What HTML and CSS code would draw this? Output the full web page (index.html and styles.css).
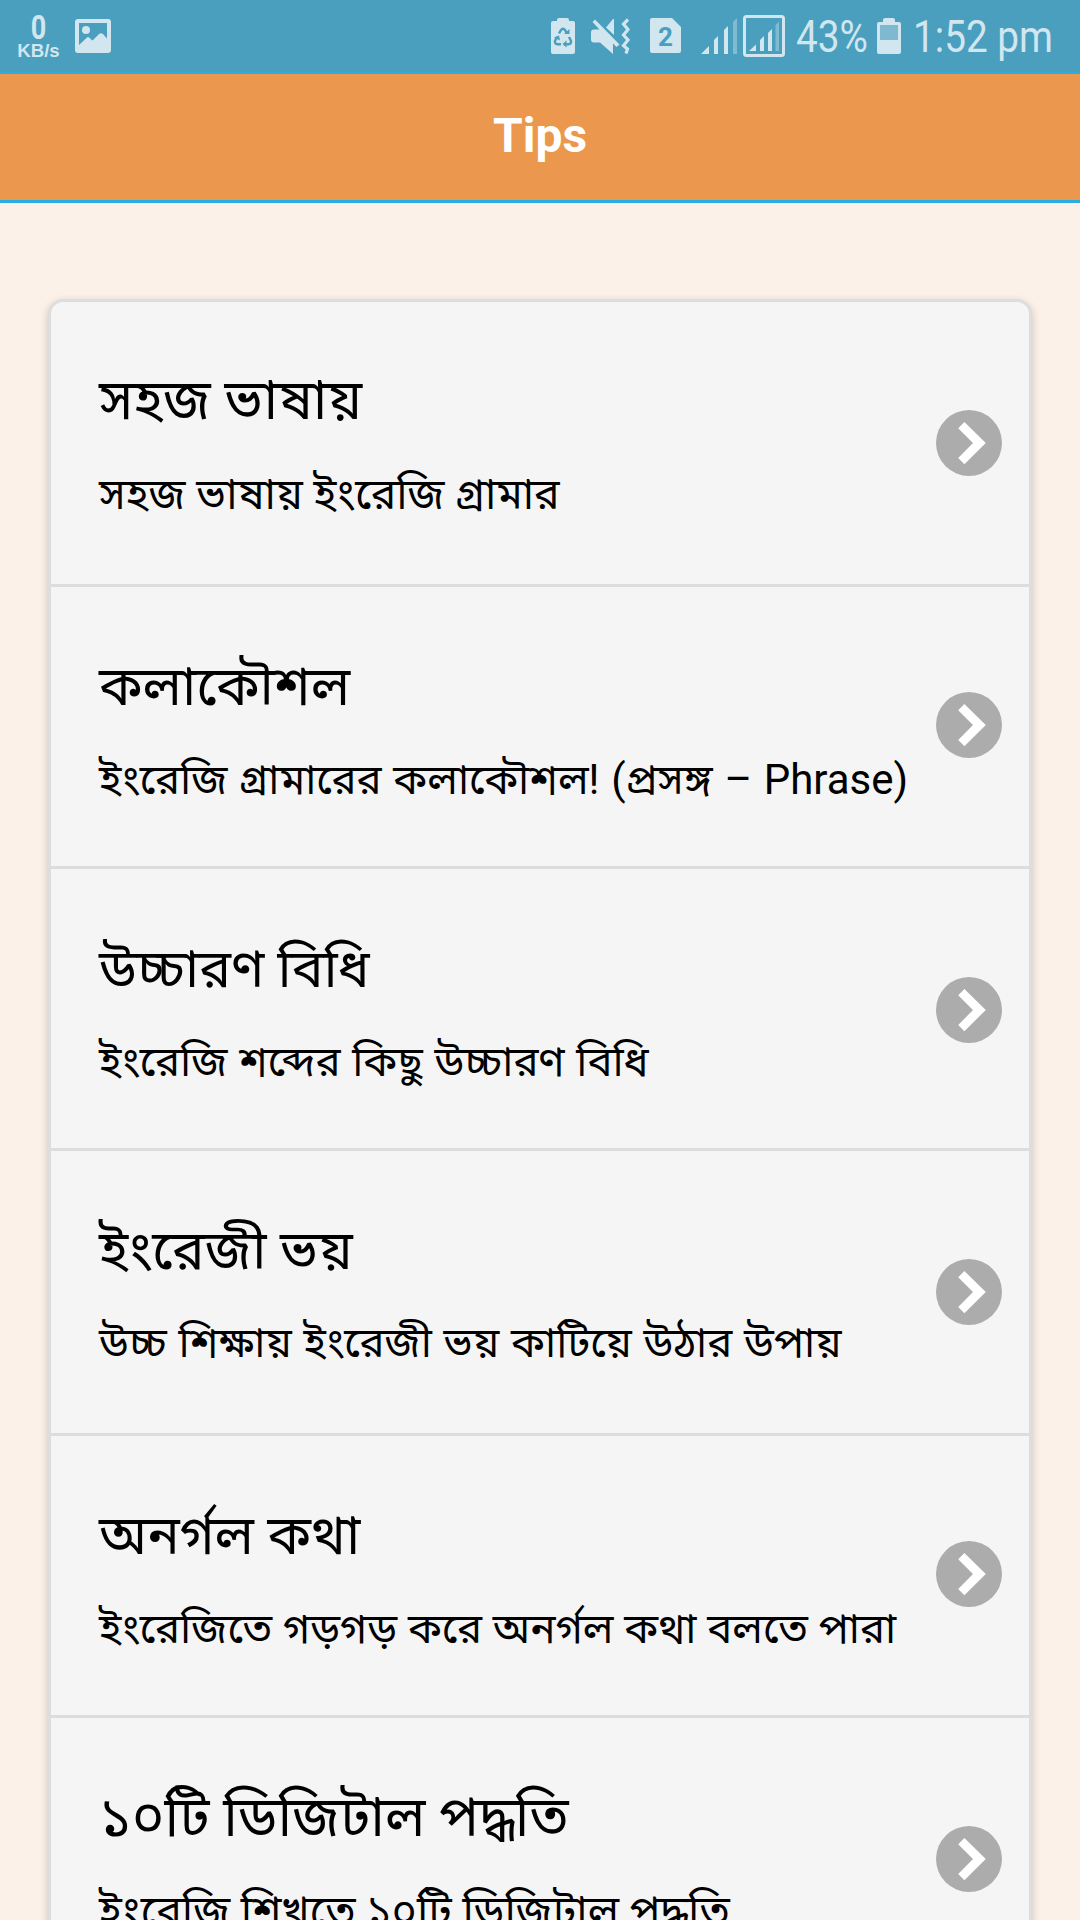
FILE: index.html
```
<!DOCTYPE html>
<html lang="bn">
<head>
  <meta charset="UTF-8" />
  <meta name="viewport" content="width=device-width, initial-scale=1.0" />
  <title>Tips</title>
  <link rel="stylesheet" href="styles.css">
</head>
<body>
  <svg width="0" height="0" class="defs">
    <symbol id="arrow" viewBox="0 0 66 66">
      <circle cx="33" cy="33" r="33" fill="#acacac" />
      <path d="M22.2 18.2 28.4 12 49.8 33 28.4 54.2 22.2 48 37 33z" fill="#fff" />
    </symbol>
  </svg>

  <div class="status-bar">
    <div class="status-left">
      <div class="speed">
        <span class="speed-value">0</span>
        <span class="speed-unit">KB/s</span>
      </div>
      <svg class="icon-picture" width="36" height="34" viewBox="0 0 36 34">
        <path fill="currentColor" fill-rule="evenodd" d="M3 0h30a3 3 0 0 1 3 3v28a3 3 0 0 1-3 3H3a3 3 0 0 1-3-3V3a3 3 0 0 1 3-3zM4 4v22l8-7.500q1-1 2 0l3.500 3 6.500-6.500q2-1.500 4 0l4 4.500V4z" />
        <circle cx="11" cy="11" r="4" fill="currentColor" />
      </svg>
    </div>

    <div class="status-right">
      <svg class="icon-saver" width="24" height="36" viewBox="0 0 24 36">
        <path fill="currentColor" d="M6 3V2q0-2 2-2h8q2 0 2 2v1h4q2 0 2 2v29q0 2-2 2H2q-2 0-2-2V5q0-2 2-2z" />
        <g fill="none" stroke="#4a9ebe" stroke-width="2.400">
          <path d="M8 15.500 10 12q2-2.500 4 0l2 3.500" />
          <path d="M6 19l-2 4q-.500 3 2.500 3.200H10" />
          <path d="M18 19l2 4q.500 3-2.500 3.200H13" />
        </g>
        <path fill="#4a9ebe" d="M13 16h5.500v-5zM3 19.500l5-2 1 5zM15.500 22.500v7l-4-3.400z" />
      </svg>
      <svg class="icon-mute" width="39" height="37" viewBox="0 0 39 37">
        <path fill="currentColor" d="M4 1.500 1.500 4 8.500 11.500H3q-3 0-3 3v7q0 3 3 3h6L22 36V25.500l3.500 3.500 3-2.500zM15 9.500 22 1h1v16z" />
        <path fill="none" stroke="currentColor" stroke-width="3.200" d="M37 1.500 32.500 6 37 11.500 32.500 17 37 22 32.500 27.500 36.500 31 35 35.500" />
      </svg>
      <svg class="icon-sim" width="31" height="35" viewBox="0 0 31 35">
        <path fill="currentColor" d="M2 0h20l9 9v24q0 2-2 2H2q-2 0-2-2V2q0-2 2-2z" />
        <text x="15.500" y="28" text-anchor="middle" class="sim-number">2</text>
      </svg>
      <svg class="icon-signal" width="36" height="36" viewBox="0 0 36 36">
        <path fill="currentColor" d="M0 36 8 28v8zM13 36V22l4-4v18zM23 36V12l4-4v28z" />
        <path fill="currentColor" opacity=".4" d="M32 36V4l4-4v36z" />
      </svg>
      <svg class="icon-signal-box" width="42" height="42" viewBox="0 0 42 42">
        <rect x="1.500" y="1.500" width="39" height="39" rx="2" fill="none" stroke="currentColor" stroke-width="3" />
        <path fill="currentColor" d="M6 36l7-6.500V36zM17 36V25l4-4v15zM25 36V18l4-4v22z" />
        <path fill="currentColor" opacity=".4" d="M32.500 36V10l3.500-3.500V36z" />
      </svg>
      <span class="percent">43%</span>
      <svg class="icon-battery" width="24" height="36" viewBox="0 0 24 36">
        <path fill="currentColor" d="M6 4V2q0-2 2-2h8q2 0 2 2v2h4q2 0 2 2v28q0 2-2 2H2q-2 0-2-2V6q0-2 2-2z" />
        <path fill="#7fb9d0" d="M3 7h18v15H3z" />
      </svg>
      <span class="time">1:52 pm</span>
    </div>
  </div>

  <header class="toolbar">Tips</header>

  <ul class="list">
    <li class="item">
      <div class="text wide">
        <h2>সহজ ভাষায়</h2>
        <p>সহজ ভাষায় ইংরেজি গ্রামার</p>
      </div>
      <svg class="arrow"><use href="#arrow" /></svg>
    </li>
    <li class="item">
      <div class="text">
        <h2>কলাকৌশল</h2>
        <p>ইংরেজি গ্রামারের কলাকৌশল! (প্রসঙ্গ – Phrase)</p>
      </div>
      <svg class="arrow"><use href="#arrow" /></svg>
    </li>
    <li class="item">
      <div class="text narrow">
        <h2>উচ্চারণ বিধি</h2>
        <p>ইংরেজি শব্দের কিছু উচ্চারণ বিধি</p>
      </div>
      <svg class="arrow"><use href="#arrow" /></svg>
    </li>
    <li class="item">
      <div class="text medium">
        <h2>ইংরেজী ভয়</h2>
        <p>উচ্চ শিক্ষায় ইংরেজী ভয় কাটিয়ে উঠার উপায়</p>
      </div>
      <svg class="arrow"><use href="#arrow" /></svg>
    </li>
    <li class="item">
      <div class="text tight">
        <h2>অনর্গল কথা</h2>
        <p>ইংরেজিতে গড়গড় করে অনর্গল কথা বলতে পারা</p>
      </div>
      <svg class="arrow"><use href="#arrow" /></svg>
    </li>
    <li class="item">
      <div class="text wide">
        <h2>১০টি ডিজিটাল পদ্ধতি</h2>
        <p>ইংরেজি শিখতে ১০টি ডিজিটাল পদ্ধতি</p>
      </div>
      <svg class="arrow"><use href="#arrow" /></svg>
    </li>
  </ul>
</body>
</html>
```

FILE: styles.css
```
* {
  box-sizing: border-box;
}
body {
  margin: 0;
  height: 1920px;
  overflow: hidden;
  background: #fcf1e8;
  color: #000;
  font-family: Roboto, "Noto Sans Bengali", "Noto Sans", sans-serif;
}
.defs {
  display: block;
}
.status-bar {
  display: flex;
  justify-content: space-between;
  height: 74px;
  padding-left: 17px;
  background: #4a9ebe;
  border-bottom: 2px solid #2bace2;
  color: #d1e6ee;
}
.status-left,
.status-right {
  display: flex;
  align-items: flex-start;
}
.speed {
  width: 43px;
  padding-top: 14px;
  text-align: center;
}
.speed-value {
  display: block;
  font-size: 33px;
  font-weight: bold;
  line-height: 28px;
  transform: scaleX(0.82);
}
.speed-unit {
  display: block;
  font-family: "Liberation Sans", Arial, sans-serif;
  font-size: 18.6px;
  font-weight: bold;
  line-height: 18px;
}
.icon-picture {
  margin: 19px 0 0 15px;
}
.icon-saver {
  margin: 18px 16px 0 0;
}
.icon-mute {
  margin: 18px 20px 0 0;
}
.icon-sim {
  margin: 18px 20px 0 0;
}
.sim-number {
  font: bold 26px Roboto, sans-serif;
  fill: #4a9ebe;
}
.icon-signal {
  margin: 18px 6px 0 0;
}
.icon-signal-box {
  margin-top: 15px;
}
.percent,
.time {
  font-size: 44px;
  line-height: 75px;
  white-space: nowrap;
  transform: scaleX(0.88);
  transform-origin: left;
}
.percent {
  width: 81px;
  margin-left: 11px;
}
.icon-battery {
  margin: 18px 12px 0 0;
}
.time {
  width: 167px;
}
.toolbar {
  height: 129px;
  border-bottom: 3px solid #2bace2;
  background: #eb984e;
  color: #fff;
  font-size: 48px;
  font-weight: bold;
  line-height: 123px;
  text-align: center;
}
.list {
  margin: 96px 48px 0;
  padding: 0;
  list-style: none;
  background: #f5f5f5;
  border: 3px solid #ddd;
  border-radius: 15px 15px 0 0;
  box-shadow: 0 3px 9px rgba(0, 0, 0, 0.2);
}
.item {
  display: flex;
  align-items: center;
  justify-content: space-between;
  height: 282px;
  padding: 0 27px 0 48px;
  border-bottom: 3px solid #ddd;
}
.text {
  padding-top: 6px;
}
.item:nth-child(3n+1) {
  height: 285px;
}
.item:nth-child(3n+1) .text {
  padding-top: 2px;
}
.text h2 {
  margin: 0;
  font-size: 54px;
  font-weight: normal;
  line-height: 100px;
}
.text p {
  margin: 0;
  font-size: 42px;
  line-height: 86px;
  white-space: nowrap;
  word-spacing: 1.3px;
}
.wide h2 {
  font-size: 55.4px;
}
.wide p {
  font-size: 42.9px;
  word-spacing: 0;
}
.medium h2 {
  font-size: 54.8px;
}
.narrow h2 {
  font-size: 53.4px;
}
.tight p {
  word-spacing: 0.4px;
}
.arrow {
  flex: none;
  width: 66px;
  height: 66px;
}
.item:nth-child(3n+2) .arrow {
  margin-bottom: 3px;
}
.item:nth-child(3n) .arrow {
  margin-top: 3px;
}
```
